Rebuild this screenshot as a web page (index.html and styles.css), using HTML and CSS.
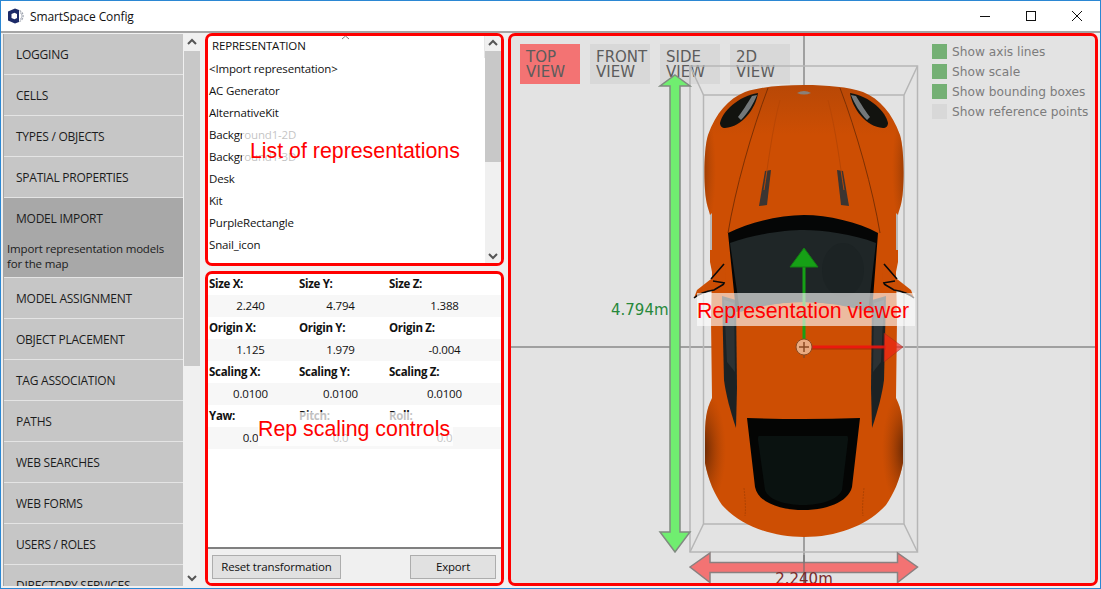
FILE: index.html
```html
<!DOCTYPE html>
<html lang="en">
<head>
<meta charset="utf-8">
<title>SmartSpace Config</title>
<link rel="stylesheet" href="styles.css">
</head>
<body>
<div class="window">
  <header class="titlebar">
    <svg class="app-icon" width="17" height="16" viewBox="0 0 17 16">
      <path d="M11.500 2.500A6 6 0 0 1 11.500 13.500" fill="none" stroke="#9ea3ae" stroke-width="1.200" stroke-dasharray="2 1"/>
      <path d="M12 4.500A4 4 0 0 1 12 11.500" fill="none" stroke="#b9bdc6" stroke-width="1.200"/>
      <path d="M0 3.500 7 .5 11 2v12l-4 1.500L0 12.500z" fill="#1c2a68"/>
      <path d="M3.500 6l3-1.200L9 6v4l-2.500 1.200L3.500 10z" fill="#fff"/>
    </svg>
    <span class="app-title">SmartSpace Config</span>
    <div class="win-controls">
      <svg class="win-btn" width="12" height="12" viewBox="0 0 12 12"><path d="M1 6.500h10" stroke="#111" fill="none"/></svg>
      <svg class="win-btn" width="12" height="12" viewBox="0 0 12 12"><rect x="1.500" y="1.500" width="9" height="9" stroke="#111" fill="none"/></svg>
      <svg class="win-btn" width="12" height="12" viewBox="0 0 12 12"><path d="M1 1l10 10M11 1 1 11" stroke="#111" fill="none"/></svg>
    </div>
  </header>
  <main class="main">
    <nav class="nav">
      <div class="nav-list">
        <div class="nav-item">LOGGING</div>
        <div class="nav-item">CELLS</div>
        <div class="nav-item">TYPES / OBJECTS</div>
        <div class="nav-item">SPATIAL PROPERTIES</div>
        <div class="nav-item nav-active">MODEL IMPORT
          <p class="nav-desc">Import representation models for the map</p>
        </div>
        <div class="nav-item">MODEL ASSIGNMENT</div>
        <div class="nav-item">OBJECT PLACEMENT</div>
        <div class="nav-item">TAG ASSOCIATION</div>
        <div class="nav-item">PATHS</div>
        <div class="nav-item">WEB SEARCHES</div>
        <div class="nav-item">WEB FORMS</div>
        <div class="nav-item">USERS / ROLES</div>
        <div class="nav-item">DIRECTORY SERVICES</div>
      </div>
      <div class="scrollbar nav-scroll">
        <svg class="chev" width="16" height="17" viewBox="0 0 16 17"><path d="M4 10l4-4 4 4" fill="none" stroke="#555" stroke-width="2"/></svg>
        <div class="thumb nav-thumb"></div>
        <svg class="chev chev-end" width="16" height="17" viewBox="0 0 16 17"><path d="M4 7l4 4 4-4" fill="none" stroke="#555" stroke-width="2"/></svg>
      </div>
    </nav>

    <div class="middle">
      <section class="box list-box">
        <div class="list-main">
          <div class="list-head">REPRESENTATION
            <svg class="sort" width="9" height="5" viewBox="0 0 9 5"><path d="M1 4l3.500-3L8 4" fill="none" stroke="#777"/></svg>
          </div>
          <div class="list-row">&lt;Import representation&gt;</div>
          <div class="list-row">AC Generator</div>
          <div class="list-row">AlternativeKit</div>
          <div class="list-row">Background1-2D</div>
          <div class="list-row">Background1-3D</div>
          <div class="list-row">Desk</div>
          <div class="list-row">Kit</div>
          <div class="list-row">PurpleRectangle</div>
          <div class="list-row">Snail_icon</div>
          <div class="list-row">Ubisense A</div>
        </div>
        <div class="scrollbar list-scroll">
          <svg class="chev" width="16" height="15" viewBox="0 0 16 15"><path d="M4 9l4-4 4 4" fill="none" stroke="#555" stroke-width="2"/></svg>
          <div class="thumb list-thumb"></div>
          <svg class="chev chev-end" width="16" height="15" viewBox="0 0 16 15"><path d="M4 6l4 4 4-4" fill="none" stroke="#555" stroke-width="2"/></svg>
        </div>
        <div class="note note-list">List of representations</div>
      </section>

      <section class="box props-box">
        <div class="props">
          <div class="prop-row">
            <span class="prop-label">Size X:</span><span class="prop-label">Size Y:</span><span class="prop-label">Size Z:</span>
          </div>
          <div class="prop-row prop-values">
            <span class="prop-value">2.240</span><span class="prop-value">4.794</span><span class="prop-value prop-last">1.388</span>
          </div>
          <div class="prop-row">
            <span class="prop-label">Origin X:</span><span class="prop-label">Origin Y:</span><span class="prop-label">Origin Z:</span>
          </div>
          <div class="prop-row prop-values">
            <span class="prop-value">1.125</span><span class="prop-value">1.979</span><span class="prop-value prop-last">-0.004</span>
          </div>
          <div class="prop-row">
            <span class="prop-label">Scaling X:</span><span class="prop-label">Scaling Y:</span><span class="prop-label">Scaling Z:</span>
          </div>
          <div class="prop-row prop-values">
            <span class="prop-value">0.0100</span><span class="prop-value">0.0100</span><span class="prop-value prop-last">0.0100</span>
          </div>
          <div class="prop-row">
            <span class="prop-label">Yaw:</span><span class="prop-label">Pitch:</span><span class="prop-label">Roll:</span>
          </div>
          <div class="prop-row prop-values">
            <span class="prop-value">0.0</span><span class="prop-value">0.0</span><span class="prop-value prop-last">0.0</span>
          </div>
        </div>
        <div class="actions">
          <button class="btn btn-reset">Reset transformation</button>
          <button class="btn btn-export">Export</button>
        </div>
        <div class="note note-props">Rep scaling controls</div>
      </section>
    </div>

    <section class="box viewer">
      <div class="view-bar">
        <div class="views">
          <div class="view-btn view-on">TOP<br>VIEW</div>
          <div class="view-btn">FRONT<br>VIEW</div>
          <div class="view-btn">SIDE<br>VIEW</div>
          <div class="view-btn">2D<br>VIEW</div>
        </div>
        <div class="legend">
          <div class="legend-row"><span class="check check-on"></span>Show axis lines</div>
          <div class="legend-row"><span class="check check-on"></span>Show scale</div>
          <div class="legend-row"><span class="check check-on"></span>Show bounding boxes</div>
          <div class="legend-row"><span class="check"></span>Show reference points</div>
        </div>
      </div>

      <svg class="scene" width="584" height="547" viewBox="511 36 584 547">
        <defs>
          <linearGradient id="hood" x1="0" y1="85" x2="0" y2="135" gradientUnits="userSpaceOnUse">
            <stop offset="0" stop-color="#b84806"/>
            <stop offset="1" stop-color="#cd4e03"/>
          </linearGradient>
          <radialGradient id="shadeRear" cx="702" cy="450" r="1" gradientUnits="userSpaceOnUse" gradientTransform="translate(702 450) scale(24 62) translate(-702 -450)">
            <stop offset="0" stop-color="#2a1004" stop-opacity=".7"/>
            <stop offset="1" stop-color="#8c3a06" stop-opacity="0"/>
          </radialGradient>
          <radialGradient id="shadeFront" cx="700" cy="170" r="1" gradientUnits="userSpaceOnUse" gradientTransform="translate(700 170) scale(16 70) translate(-700 -170)">
            <stop offset="0" stop-color="#5a2405" stop-opacity=".6"/>
            <stop offset="1" stop-color="#8c3a06" stop-opacity="0"/>
          </radialGradient>
          <clipPath id="bodyClip">
            <path id="bodyShape" d="M804 85C780 85 760 87 745 92 728 99 716 113 708 135 704 148 704 175 705 190 706 205 709 210 710 215L710 262 712 272 711 320 712 398C706 410 705 420 705 440L705 463C708 480 715 495 722 505 740 525 770 537 804 537 838 537 868 525 886 505 893 495 900 480 903 463L903 440C903 420 902 410 896 398L897 320 896 272 898 262 898 215C899 210 902 205 903 190 904 175 904 148 900 135 892 113 880 99 863 92 848 87 828 85 804 85Z"/>
          </clipPath>
          <g id="halfCar">
            <path d="M694 298 697 290 711 279 722 282 722 291 708 291 696 297Z" fill="#cc4e04"/>
            <path d="M712 267 725 266 726 284 716 288Z" fill="#cc4e04"/>
            <path d="M694 298Q701 292 714 290L724 284M711 279 724 264M713 281 725 283" stroke="#0a0a0a" stroke-width="1.600" fill="none"/>
            <path d="M710 215 712 213 712 250 710 250Z" fill="#b9b9b9"/>
            <path d="M720 123C722 112 738 96 758 93 756 108 742 127 725 128 722 128 720 126 720 123Z" fill="#12130f"/>
            <path d="M741 120C748 113 754 103 757 95L752 96C747 104 742 112 738 117Z" fill="#73787a"/>
            <path d="M765 171 771 170 767 205 759 206Z" fill="#3b3532"/>
            <path d="M768 88C752 130 735 190 728 233" stroke="#7c3004" stroke-width="1" fill="none"/>
            <path d="M780 100C772 130 768 165 764 190" stroke="#b84604" stroke-width="1" fill="none"/>
            <path d="M722 296 736 300 737 388 736 428C730 410 726 395 724 380Z" fill="#1c2224"/>
            <path d="M724 300 734 303 735 372 727 362Z" fill="#2c3234"/>
            <path d="M744 488C745 498 746 508 745 516" stroke="#a13d03" stroke-width=".7" stroke-dasharray="2 1" fill="none"/>
          </g>
        </defs>

        <g class="axes">
          <path d="M804 36V90M804 530V583"/>
          <path d="M511 347H1095"/>
        </g>
        <g class="bbox">
          <path d="M690 552V66H917.500V552Z"/>
          <path d="M703.500 524V95H904V524Z"/>
          <path d="M690 66 703.500 95M917.500 66 904 95M690 552 703.500 524M917.500 552 904 524"/>
        </g>

        <use href="#bodyShape" fill="url(#hood)"/>
        <g clip-path="url(#bodyClip)">
          <rect x="690" y="370" width="60" height="170" fill="url(#shadeRear)"/>
          <rect x="690" y="370" width="60" height="170" fill="url(#shadeRear)" transform="matrix(-1 0 0 1 1608 0)"/>
          <rect x="690" y="90" width="30" height="160" fill="url(#shadeFront)"/>
          <rect x="690" y="90" width="30" height="160" fill="url(#shadeFront)" transform="matrix(-1 0 0 1 1608 0)"/>
        </g>
        <use href="#halfCar"/>
        <use href="#halfCar" transform="matrix(-1 0 0 1 1608 0)"/>

        <path d="M728 233C750 222 780 215 804 215 828 215 858 222 878 233L872 312Q804 292 736 312Z" fill="#050606"/>
        <path d="M730 243C755 234 785 230 804 230 823 230 853 234 876 243L868 312Q804 292 740 312Z" fill="#1f2627"/>
        <ellipse cx="843" cy="270" rx="21" ry="27" fill="#1c2324"/>
        <path d="M747 418Q804 420 860 418L852 487C848 503 825 510 803 510 781 510 758 503 755 487Z" fill="#040504"/>
        <path d="M759 436 847 436C848 436 848 438 848 440L842 490C838 500 820 505 803 505 786 505 768 500 765 490L758 440C758 438 758 436 759 436Z" fill="#0a1210"/>
        <path d="M797 93Q804 89 811 93Q804 96 797 93Z" fill="#8a8078"/>

        <path class="arrow-green" d="M675 75 690 86H680V532H690L675 552 660 532H670V86H660Z"/>
        <path class="arrow-red" d="M690 567 710 553V562.500H897.500V553L917.500 567 897.500 582.500V572.500H710V582.500Z"/>
        <path class="axis-over" d="M804 555V583"/>

        <path d="M804 267V340" stroke="#16a016" stroke-width="3" fill="none"/>
        <path d="M804 248 818 267H790Z" fill="#16a016" stroke="#147a14"/>
        <path d="M812 347H886" stroke="rgba(238,20,16,.9)" stroke-width="3" fill="none"/>
        <path d="M812 349H886" stroke="rgba(120,20,10,.5)" fill="none"/>
        <path d="M884 333 903 347 884 362Z" fill="rgba(240,30,24,.62)" stroke="rgba(140,40,30,.4)"/>
        <circle cx="804" cy="347" r="8" fill="#e9aa80" stroke="#8a4a22"/>
        <path d="M804 342V352M799 347H809M804 355V358" stroke="#8a4a22" stroke-width="1.500" fill="none"/>

        <text class="dim-green" x="611" y="315">4.794m</text>
        <text class="dim-red" x="804" y="584">2.240m</text>
      </svg>

      <div class="note note-viewer">Representation viewer</div>
    </section>
  </main>
</div>
</body>
</html>
```
FILE: styles.css
```css
* { box-sizing: border-box; }
html, body { margin: 0; padding: 0; }
body {
  width: 1101px;
  height: 589px;
  overflow: hidden;
  font-family: "Open Sans", "Noto Sans", sans-serif;
  font-size: 11.500px;
  letter-spacing: -.17px;
  color: #111;
}
.window {
  width: 1101px;
  height: 589px;
  display: flex;
  flex-direction: column;
  border: 1px solid #2b87d3;
  background: #f0f0f0;
}
.titlebar {
  height: 30px;
  flex: none;
  display: flex;
  align-items: center;
  background: #fff;
  padding-left: 7px;
}
.app-icon { flex: none; }
.app-title { margin-left: 5px; font-size: 12px; letter-spacing: -.1px; }
.win-controls {
  margin-left: auto;
  display: flex;
  gap: 34px;
  padding-right: 17px;
}
.win-btn { display: block; }

.main {
  flex: 1;
  min-height: 0;
  display: flex;
  border-top: 2px solid #a5a5a5;
  padding: 0 2px 2px 2px;
}

/* left navigation */
.nav {
  width: 197px;
  flex: none;
  display: flex;
  margin-top: 1px;
  border-left: 1px solid #a5a5a5;
  overflow: hidden;
}
.nav-list { width: 179px; flex: none; overflow: hidden; }
.nav-item {
  min-height: 41px;
  padding: 13px 12px 0;
  background: #c6c6c6;
  border-bottom: 1px solid #e4e4e4;
  font-size: 12px;
  line-height: 15px;
  letter-spacing: -.25px;
  color: #1c1c1c;
}
.nav-active {
  min-height: 80px;
  background: #a8a8a8;
}
.nav-desc {
  margin: 15px -12px 0 -9px;
  padding-right: 4px;
  line-height: 15px;
  font-size: 11.500px;
  letter-spacing: -.17px;
}

.scrollbar {
  display: flex;
  flex-direction: column;
  background: #f0f0f0;
  flex: none;
}
.chev { display: block; flex: none; }
.chev-end { margin-top: auto; }
.thumb { background: #c8c8c8; flex: none; }
.nav-scroll { width: 16px; margin-left: 1px; }
.nav-thumb { height: 315px; }
.list-scroll { width: 16px; }
.list-thumb { height: 111px; }

/* red annotated boxes */
.box {
  border: 3px solid #f00;
  border-radius: 7px;
  position: relative;
  overflow: hidden;
}
.middle {
  width: 299px;
  flex: none;
  margin-left: 5px;
  display: flex;
  flex-direction: column;
  gap: 5px;
}
.list-box {
  height: 233px;
  flex: none;
  display: flex;
  background: #fff;
}
.list-main { flex: 1; min-width: 0; overflow: hidden; }
.list-head {
  height: 22px;
  padding: 2px 0 0 4px;
  line-height: 15px;
  position: relative;
  border-right: 1px solid #e6e6e6;
}
.sort { position: absolute; left: 133px; top: -1px; }
.list-row {
  height: 22px;
  line-height: 22px;
  padding-left: 1px;
}

.props-box {
  flex: 1;
  min-height: 0;
  display: flex;
  flex-direction: column;
  background: #fff;
}
.props { flex: 1; margin-top: -1px; }
.prop-row {
  height: 22px;
  display: grid;
  grid-template-columns: 90px 90px 1fr;
  align-items: center;
  line-height: 22px;
}
.prop-values { background: #f7f7f7; }
.prop-label { font-weight: 700; padding-left: 1px; letter-spacing: -.3px; }
.prop-value { text-align: center; padding-right: 5px; }
.prop-last { padding-right: 0; }
.actions {
  height: 36px;
  flex: none;
  display: flex;
  justify-content: space-between;
  padding: 6px 5px 0 4px;
  border-top: 2px solid #808080;
  background: #f0f0f0;
}
.btn {
  height: 24px;
  margin: 0;
  padding: 0 0 2px;
  background: #e1e1e1;
  border: 1px solid #adadad;
  font: inherit;
  letter-spacing: inherit;
  color: #111;
}
.btn-reset { width: 129px; }
.btn-export { width: 86px; }

.note {
  position: absolute;
  font-family: "Liberation Sans", Arial, sans-serif;
  font-size: 21.330px;
  letter-spacing: 0;
  color: #f00;
  white-space: nowrap;
  background: rgba(255, 255, 255, .74);
  text-align: left;
}
.note-list {
  left: 34px;
  top: 92px;
  width: 225px;
  height: 44px;
  padding-left: 8px;
  line-height: 46px;
}
.note-props {
  left: 50px;
  top: 138px;
  width: 195px;
  height: 34px;
  line-height: 34px;
}

/* viewer */
.viewer {
  flex: 1;
  min-width: 0;
  margin-left: 4px;
  background: #e3e3e3;
}
.view-bar {
  display: flex;
  justify-content: space-between;
  padding: 8px 4px 0 9px;
}
.views { display: flex; gap: 10px; }
.view-btn {
  width: 60px;
  height: 40px;
  padding: 6px 0 0 6px;
  background: #d8d8d8;
  font-family: "DejaVu Sans", sans-serif;
  font-size: 15px;
  line-height: 15px;
  letter-spacing: 0;
  color: #5c5c5c;
}
.view-on { background: #f37373; }
.legend {
  width: 159px;
  display: flex;
  flex-direction: column;
  gap: 5px;
}
.legend-row {
  height: 15px;
  display: flex;
  align-items: center;
  gap: 5px;
  font-family: "DejaVu Sans", sans-serif;
  font-size: 12.200px;
  letter-spacing: 0;
  color: #7c7c7c;
  white-space: nowrap;
}
.check { width: 15px; height: 15px; background: #d8d8d8; flex: none; }
.check-on { background: #74b074; }
.scene { position: absolute; left: 0; top: 0; display: block; }
.axes path { stroke: #a0a0a0; stroke-width: 2; fill: none; }
.bbox path { stroke: #b6b6b6; stroke-width: 1.500; fill: none; }
.arrow-green { fill: #70ee70; stroke: #808a80; stroke-width: 1.500; }
.arrow-red { fill: #f37373; stroke: #8a8080; stroke-width: 1.500; }
.axis-over { stroke: rgba(110, 110, 110, .55); stroke-width: 2; fill: none; }
.dim-green {
  font-family: "DejaVu Sans", sans-serif;
  font-size: 15px;
  letter-spacing: 0;
  fill: #27883a;
}
.dim-red {
  font-family: "DejaVu Sans", sans-serif;
  font-size: 15px;
  letter-spacing: 0;
  fill: #7a2c2c;
  text-anchor: middle;
}
.note-viewer {
  left: 186px;
  top: 257px;
  width: 218px;
  height: 33px;
  line-height: 37px;
  background: rgba(255, 255, 255, .62);
}
```
